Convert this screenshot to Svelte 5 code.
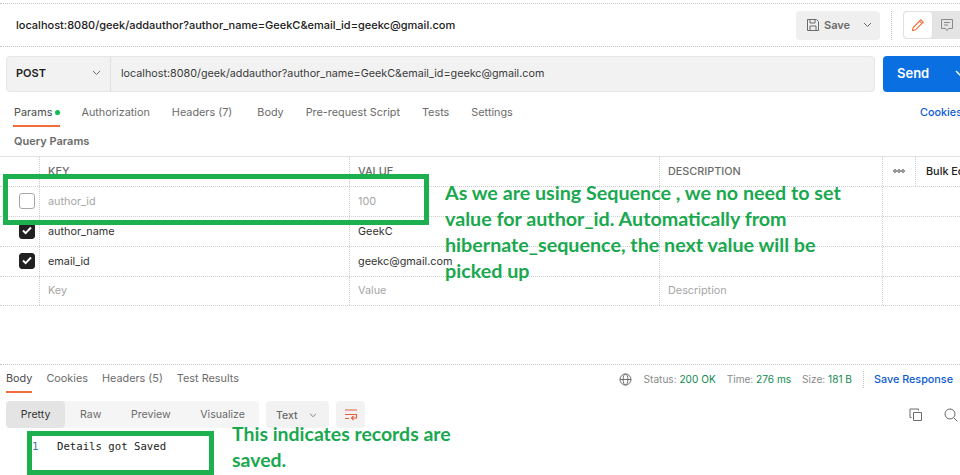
<script>
  const tabs = [
    { label: 'Authorization' }, { label: 'Headers (7)', wide: true }, { label: 'Body' },
    { label: 'Pre-request Script' }, { label: 'Tests' }, { label: 'Settings' }
  ];
  const rows = [
    { key: 'author_id', value: '100', on: false },
    { key: 'author_name', value: 'GeekC', on: true },
    { key: 'email_id', value: 'geekc@gmail.com', on: true }
  ];
</script>

<div class="page">
  <header class="head">
    <div class="title">localhost:8080/geek/addauthor?author_name=GeekC&amp;email_id=geekc@gmail.com</div>
    <div class="save">
      <svg width="14" height="14" viewBox="0 0 14 14" fill="none" stroke="#6b6b6b"><path d="M1.5 1.5h9l2 2v9h-11z M4 1.5v3.5h5v-3.5 M4 12.5v-4.5h6v4.5"/></svg>
      <span>Save</span>
      <svg class="sv" width="9" height="6" viewBox="0 0 9 6" fill="none" stroke="#6b6b6b"><path d="M1 1l3.5 3.5L8 1"/></svg>
    </div>
    <div class="vsep"></div>
    <div class="modes">
      <div class="mode on"><svg width="14" height="14" viewBox="0 0 14 14" fill="none" stroke="#f26b3a" stroke-width="1.1"><path d="M1.5 12.5l.7-3L9.8 1.8l2.4 2.4-7.7 7.6z M8.5 3.2l2.4 2.4"/></svg></div>
      <div class="mode"><svg width="14" height="14" viewBox="0 0 14 14" fill="none" stroke="#8a8a8a"><path d="M1.5 1.5h11v9h-4l-1.500 2-1.500-2h-4z M4 4.5h6 M4 7h4"/></svg></div>
    </div>
  </header>

  <section class="req">
    <div class="bar">
      <div class="method"><span>POST</span>
        <svg width="9" height="6" viewBox="0 0 9 6" fill="none" stroke="#6b6b6b"><path d="M1 1l3.5 3.5L8 1"/></svg>
      </div>
      <div class="url">localhost:8080/geek/addauthor?author_name=GeekC&amp;email_id=geekc@gmail.com</div>
    </div>
    <div class="send"><span class="sl">Send</span>
      <svg width="10" height="6" viewBox="0 0 10 6" fill="none" stroke="#fff" stroke-width="1.4"><path d="M1 1l4 4 4-4"/></svg>
    </div>
  </section>

  <nav class="tabs">
    <div class="tab active">Params<i class="dot"></i></div>
    {#each tabs as t}<div class="tab" class:wide={t.wide}>{t.label}</div>{/each}
    <div class="cookies">Cookies</div>
  </nav>

  <div class="qp">Query Params</div>

  <div class="table">
    <div class="row th">
      <div class="c0"></div>
      <div class="c1">KEY</div>
      <div class="c2">VALUE</div>
      <div class="c3">DESCRIPTION</div>
      <div class="c4"><svg width="12" height="4" viewBox="0 0 12 4" fill="none" stroke="#555"><circle cx="2" cy="2" r="1.3"/><circle cx="6" cy="2" r="1.3"/><circle cx="10" cy="2" r="1.3"/></svg></div>
      <div class="c5">Bulk Edit</div>
    </div>
    {#each rows as r}
      <div class="row" class:off={!r.on}>
        <div class="c0">
          {#if r.on}
            <span class="cb on"><svg width="10" height="9" viewBox="0 0 10 9" fill="none" stroke="#fff" stroke-width="2"><path d="M1 4.5l2.6 2.6L9 1.5"/></svg></span>
          {:else}
            <span class="cb"></span>
          {/if}
        </div>
        <div class="c1">{r.key}</div>
        <div class="c2">{r.value}</div>
        <div class="c3"></div>
      </div>
    {/each}
    <div class="row off ph">
      <div class="c0"></div>
      <div class="c1">Key</div>
      <div class="c2">Value</div>
      <div class="c3">Description</div>
    </div>
  </div>

  <section class="resp">
    <div class="rtabs">
      <div class="rtab active">Body</div>
      <div class="rtab">Cookies</div>
      <div class="rtab">Headers (5)</div>
      <div class="rtab">Test Results</div>
      <div class="status">
        <svg width="13" height="13" viewBox="0 0 13 13" fill="none" stroke="#6b6b6b"><circle cx="6.5" cy="6.5" r="5.5"/><ellipse cx="6.5" cy="6.5" rx="2.4" ry="5.5"/><path d="M1 6.5h11"/></svg>
        <span class="st">Status: <b>200 OK</b></span>
        <span class="st">Time: <b>276 ms</b></span>
        <span class="st">Size: <b>181 B</b></span>
        <i class="div"></i>
        <span class="sr">Save Response</span>
      </div>
    </div>
    <div class="tools">
      <div class="seg">
        <span class="sg active">Pretty</span><span class="sg">Raw</span><span class="sg">Preview</span><span class="sg">Visualize</span>
      </div>
      <div class="fmt">Text
        <svg width="8" height="5" viewBox="0 0 9 6" fill="none" stroke="#6b6b6b"><path d="M1 1l3.5 3.5L8 1"/></svg>
      </div>
      <div class="wrap">
        <svg width="14" height="13" viewBox="0 0 14 13" fill="none" stroke="#e2603a" stroke-width="1.1"><path d="M1 2h12 M1 6.5h11.500v3.500h-5 M9.500 8l-2 2 2 2 M1 10.500h4"/></svg>
      </div>
      <div class="rt">
        <svg width="13" height="13" viewBox="0 0 13 13" fill="none" stroke="#6b6b6b"><path d="M4.500 4.500h8v8h-8z M2.500 9.500h-1.500v-8.500h8.500v1.500"/></svg>
        <svg width="14" height="14" viewBox="0 0 14 14" fill="none" stroke="#6b6b6b"><circle cx="6" cy="6" r="5"/><path d="M9.800 9.800l3.500 3.500"/></svg>
      </div>
    </div>
    <div class="code"><span class="ln">1</span><span>Details got Saved</span></div>
  </section>

  <div class="box b1"></div>
  <div class="box b2"></div>
  <p class="note n1">As we are using Sequence , we no need to set<br>value for author_id. Automatically from<br>hibernate_sequence, the next value will be<br>picked up</p>
  <p class="note n2">This indicates records are<br>saved.</p>
</div>

<style>
  :global(body) { margin: 0; background: #fff; }
  .page {
    position: relative; width: 960px; height: 475px; overflow: hidden; background: #fff;
    font-family: Inter, "Liberation Sans", sans-serif; font-size: 10.85px; color: #6b6b6b;
  }
  .head {
    margin-top: 3px; height: 44px; box-sizing: border-box; display: flex; align-items: center;
    border-top: 1px dotted #c4c4c4; border-bottom: 1px dotted #c4c4c4; padding: 0 0 0 16px;
  }
  .title { flex: 1; color: #212121; font-size: 11px; font-weight: 500; white-space: nowrap; }
  .save {
    width: 84px; height: 29px; box-sizing: border-box; background: #efefef; border-radius: 4px;
    display: flex; align-items: center; padding: 0 8px 0 10px; gap: 4px; font-weight: 600; color: #6b6b6b; font-size: 11px;
  }
  .save .sv { margin-left: auto; }
  .vsep { width: 0; height: 29px; border-left: 1px dotted #c4c4c4; margin: 0 11px; }
  .modes { display: flex; width: 59px; height: 28px; background: #e4e4e4; border-radius: 4px; margin-right: -2px; flex: none; }
  .mode { width: 30px; display: flex; align-items: center; justify-content: center; box-sizing: border-box; border-radius: 4px; }
  .mode.on { background: #fff; border: 1px solid #e0e0e0; }

  .req { display: flex; margin: 9px 0 0 6px; height: 36px; gap: 8px; width: 1000px; }
  .bar {
    width: 869px; flex: none; display: flex; background: #f2f2f2; border: 1px solid #e6e6e6; border-radius: 4px; box-sizing: border-box; align-items: center; height: 36px;
  }
  .method {
    width: 104px; height: 100%; box-sizing: border-box; display: flex; align-items: center; justify-content: space-between;
    padding: 0 9px 2px 9px; border-right: 1px solid #e0e0e0; font-weight: 600; color: #212121; flex: none; font-size: 11px;
  }
  .url { padding: 0 0 2px 10px; color: #3a3a3a; font-size: 10.77px; }
  .send {
    width: 110px; flex: none; background: #0a6fe0; border-radius: 4px; color: #fff; font-size: 13px; font-weight: 600;
    display: flex; align-items: center; padding: 0 0 2px 14px; box-sizing: border-box;
  }
  .sl { width: 58px; }

  .tabs { display: flex; align-items: center; height: 27px; margin-top: 8px; padding-left: 14px; position: relative; white-space: nowrap; }
  .tab { margin-right: 22px; height: 27px; line-height: 25px; box-sizing: border-box; }
  .tab.wide { margin-right: 25px; }
  .tab.active { color: #4a4a4a; border-bottom: 2px solid #f26b3a; margin-right: 21px; margin-left: -1px; padding-left: 1px; }
  .dot { display: inline-block; width: 5px; height: 5px; border-radius: 50%; background: #0cbb52; margin-left: 3px; vertical-align: 1px; }
  .cookies { position: absolute; left: 920px; top: 0; line-height: 25px; color: #0b5bd3; font-weight: 500; }

  .qp { height: 29px; line-height: 29px; padding-left: 14px; font-weight: 600; font-size: 11px; color: #6b6b6b; }

  .table { border-top: 1px solid #e3e3e3; width: 1000px; }
  .row { display: flex; height: 30px; border-bottom: 1px dotted #cfcfcf; box-sizing: border-box; align-items: center; color: #333; }
  .row > div { height: 100%; display: flex; align-items: center; box-sizing: border-box; border-right: 1px dotted #cfcfcf; white-space: nowrap; flex: none; padding-bottom: 2px; }
  .row .c0 { width: 40px; padding-left: 19px; }
  .row .c1 { width: 310px; padding-left: 8px; }
  .row .c2 { width: 310px; padding-left: 8px; }
  .row .c3 { width: 223px; padding-left: 8px; }
  .row .c4 { width: 33px; justify-content: center; }
  .row .c5 { padding-left: 10px; border-right: 0; color: #212121; font-weight: 500; }
  .th { color: #6b6b6b; font-weight: 500; }
  .off { color: #a6a6a6; }
  .ph { height: 29px; }
  .row.ph > div { padding-bottom: 3px; }
  .cb { width: 16px; height: 16px; box-sizing: border-box; border: 1px solid #a6a6a6; border-radius: 3px; display: flex; align-items: center; justify-content: center; }
  .cb.on { background: #212121; border-color: #212121; }

  .resp { position: relative; }
  .rtabs { margin-top: 58px; height: 29px; border-top: 1px dotted #c4c4c4; display: flex; align-items: center; padding-left: 6px; box-sizing: border-box; white-space: nowrap; font-size: 10.850px; }
  .rtab { margin-right: 14px; height: 28px; line-height: 27px; box-sizing: border-box; }
  .rtab.active { color: #4a4a4a; border-bottom: 2px solid #f26b3a; }
  .status { margin-left: auto; display: flex; align-items: center; gap: 11px; padding-right: 7px; font-size: 10.100px; color: #8a8a8a; height: 100%; }
  .status svg { margin-right: 1px; }
  .status b { font-weight: 400; color: #0f8a50; }
  .div { width: 0; height: 17px; border-left: 1px dotted #c4c4c4; margin-right: -1px; }
  .sr { color: #0b5bd3; font-weight: 500; font-size: 10.800px; }

  .tools { display: flex; align-items: center; margin: 8px 0 0 6px; height: 27px; }
  .seg { display: flex; width: 253px; height: 27px; background: #f5f5f5; border-radius: 4px; align-items: center; font-size: 10.600px; }
  .sg { padding: 0 14.800px; line-height: 27px; }
  .sg.active { background: #e4e4e4; border-radius: 4px; color: #333; }
  .fmt { margin-left: 7px; width: 63px; height: 27px; background: #f2f2f2; border-radius: 4px; box-sizing: border-box; display: flex; align-items: center; justify-content: space-between; padding: 2px 12px 0 10px; font-size: 10.500px; font-weight: 500; }
  .wrap { margin-left: 7px; width: 29px; height: 27px; background: #f2f2f2; border-radius: 4px; display: flex; align-items: center; justify-content: center; }
  .rt { margin-left: auto; display: flex; justify-content: space-between; width: 49px; align-items: center; margin-right: 2px; }

  .code { margin: 11px 0 0 32px; font-family: "DejaVu Sans Mono", "Liberation Mono", monospace; font-size: 10.670px; color: #212121; line-height: 15px; display: flex; }
  .ln { width: 25px; color: #3a7ca5; }

  .box { position: absolute; border: 5px solid #1db04f; box-sizing: border-box; }
  .b1 { left: 3px; top: 174px; width: 426px; height: 51px; }
  .b2 { left: 27px; top: 431px; width: 187px; height: 44px; }
  .note { position: absolute; margin: 0; font-family: Lato, "Open Sans", sans-serif; font-weight: 700; color: #1aa84f; font-size: 19.700px; line-height: 26px; white-space: nowrap; }
  .n1 { left: 445px; top: 180px; }
  .n2 { left: 232px; top: 421px; font-size: 19.450px; }
</style>
